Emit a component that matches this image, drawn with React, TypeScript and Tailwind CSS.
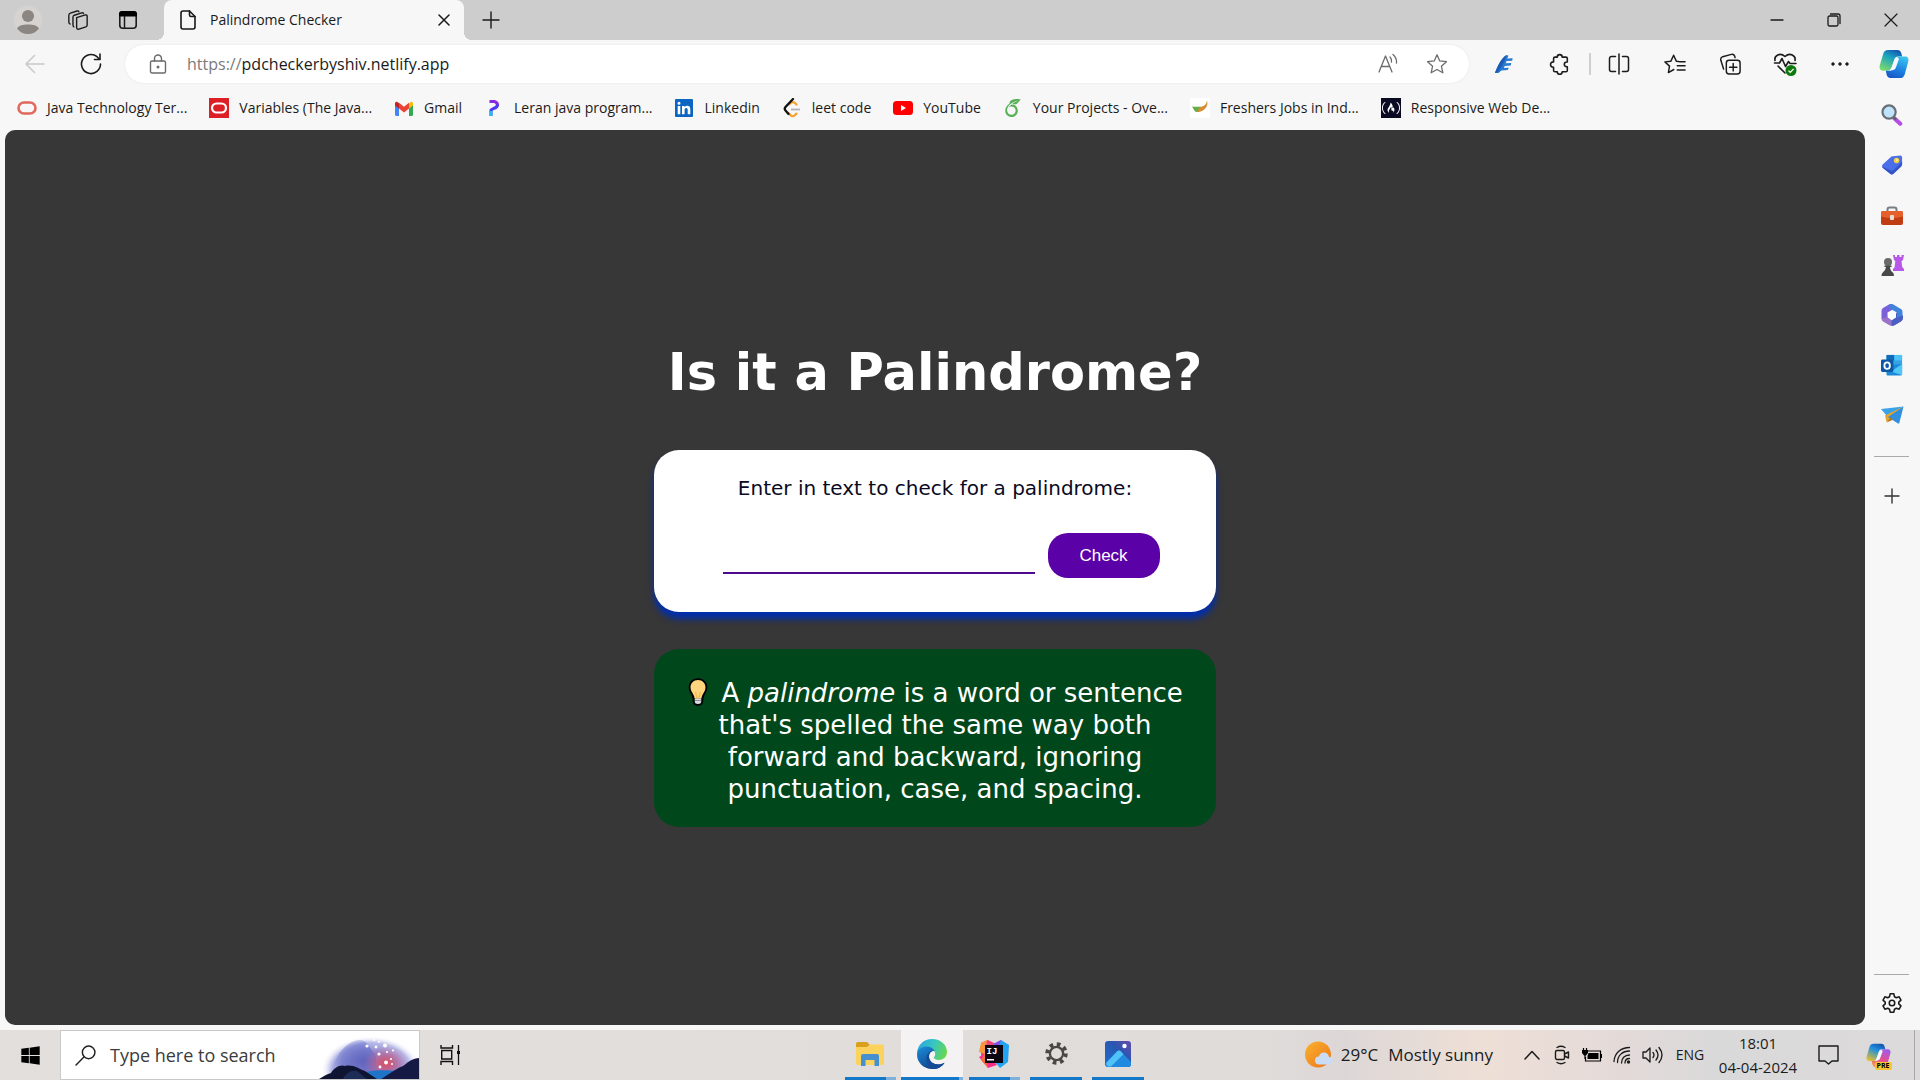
import React from "react";
import { SiFreecodecamp, SiOverleaf } from "react-icons/si";
import { FaWindows } from "react-icons/fa";

type SvgProps = { w: number; h?: number; box?: string; children: React.ReactNode; className?: string };

function Svg({ w, h = w, box = "0 0 24 24", children, className = "" }: SvgProps) {
  return (
    <svg width={w} height={h} viewBox={box} fill="none" className={`block shrink-0 ${className}`} aria-hidden="true">
      {children}
    </svg>
  );
}

function Line({ w, h, box, sw = 1.5, className = "", children }: SvgProps & { sw?: number }) {
  return (
    <Svg w={w} h={h} box={box} className={className}>
      <g stroke="currentColor" strokeWidth={sw} strokeLinecap="round" strokeLinejoin="round">
        {children}
      </g>
    </Svg>
  );
}

function IconButton({ label, className, children }: { label: string; className: string; children: React.ReactNode }) {
  return (
    <button type="button" aria-label={label} className={`flex shrink-0 items-center justify-center ${className}`}>
      {children}
    </button>
  );
}

/* ---------- tab strip ---------- */

function TabStrip() {
  return (
    <header className="flex h-10 items-center bg-[#cdcdcd] text-[#1a1a1a]">
      <IconButton label="Profile" className="w-14">
        <Svg w={28}>
          <circle cx="12" cy="12" r="12" fill="#d6d3d0" />
          <circle cx="12" cy="8.6" r="5.2" fill="#8b8682" />
          <path d="M2.6 19.2C4 16.6 7.400 15.800 12 15.800s8 .8 9.400 3.400A12 12 0 0 1 12 24a12 12 0 0 1-9.400-4.800z" fill="#8b8682" />
        </Svg>
      </IconButton>
      <IconButton label="Workspaces" className="w-11">
        <Line w={22} sw={1.5}>
          <path d="M10.500 9.500 20 6.500q2-.4 2 1.500v9.500q0 1.500-1.400 2l-7.600 2.500q-2.500.6-2.500-2z" />
          <path d="M7.500 19.500q-1-.5-1-2V9q0-1.600 1.500-2.200l8-2.600q1.600-.4 2 .8" />
          <path d="M3.500 16.500q-1.500-.5-1.500-2V7q0-1.800 1.700-2.400L11 2.200q1.600-.4 2 .8" />
        </Line>
      </IconButton>
      <IconButton label="Tab actions" className="w-14">
        <Svg w={20} box="0 0 20 20">
          <rect x="1.800" y="1.800" width="16.400" height="16.400" rx="3" stroke="currentColor" strokeWidth="1.600" />
          <path d="M1 6.500V4a3 3 0 0 1 3-3h12a3 3 0 0 1 3 3v2.500z" fill="#000" />
          <path d="M6.500 6v12" stroke="currentColor" strokeWidth="1.500" />
        </Svg>
      </IconButton>
      <div className="h-2 w-2 shrink-0 self-end bg-[radial-gradient(circle_at_0_0,#cdcdcd_8px,#f7f7f7_8px)]" />
      <div className="flex h-10 w-[300px] shrink-0 items-center rounded-t-lg bg-[#f7f7f7] pl-4">
        <Line w={16} h={20} box="0 0 16 20" sw={1.6}>
          <path d="M3 1h6.500L15 6.500V17a2 2 0 0 1-2 2H3a2 2 0 0 1-2-2V3a2 2 0 0 1 2-2z" />
          <path d="M9.500 1v4a1.500 1.500 0 0 0 1.500 1.500h4" />
        </Line>
        <span className="ml-3.5 flex-1 text-sm">Palindrome Checker</span>
        <IconButton label="Close tab" className="mr-2 w-6">
          <Line w={12} box="0 0 12 12" sw={1.5}>
            <path d="m1 1 10 10M11 1 1 11" />
          </Line>
        </IconButton>
      </div>
      <div className="h-2 w-2 shrink-0 self-end bg-[radial-gradient(circle_at_100%_0,#cdcdcd_8px,#f7f7f7_8px)]" />
      <IconButton label="New tab" className="w-[38px]">
        <Line w={18} box="0 0 18 18" sw={1.4}>
          <path d="M9 1v16M1 9h16" />
        </Line>
      </IconButton>
      <div className="ml-auto flex pr-px">
        <IconButton label="Minimise" className="h-10 w-[57px]">
          <Line w={14} box="0 0 14 14" sw={1.3}>
            <path d="M1 7h12" />
          </Line>
        </IconButton>
        <IconButton label="Restore" className="h-10 w-[57px]">
          <Line w={14} box="0 0 14 14" sw={1.3}>
            <rect x="1" y="3" width="10" height="10" rx="1.500" />
            <path d="M3.500 1H11a2 2 0 0 1 2 2v7.500" />
          </Line>
        </IconButton>
        <IconButton label="Close" className="h-10 w-[57px]">
          <Line w={14} box="0 0 14 14" sw={1.2}>
            <path d="m1 1 12 12M13 1 1 13" />
          </Line>
        </IconButton>
      </div>
    </header>
  );
}

/* ---------- toolbar ---------- */

function CopilotMark({ size, id, pre = false }: { size: number; id: string; pre?: boolean }) {
  return (
    <Svg w={size} box="0 0 30 30">
      <defs>
        <linearGradient id={`${id}a`} x1="0.700" y1="0" x2="0.200" y2="1">
          <stop offset="0" stopColor="#1559b0" />
          <stop offset=".35" stopColor={pre ? "#1f8fe0" : "#18a0c0"} />
          <stop offset="1" stopColor={pre ? "#e8c02c" : "#7ddc6a"} />
        </linearGradient>
        <linearGradient id={`${id}b`} x1="0.700" y1="0" x2="0.300" y2="1">
          <stop offset="0" stopColor={pre ? "#a05be8" : "#38c4f0"} />
          <stop offset=".6" stopColor={pre ? "#e8508c" : "#1e7fe0"} />
          <stop offset="1" stopColor={pre ? "#f59a4a" : "#1858c8"} />
        </linearGradient>
      </defs>
      <path d="M9 1h9.500c2.300 0 3.200 1.300 3.900 3.500l.8 3h-4c-2.200 0-3.200 1-3.900 3l-2.800 8c-.7 2-2 3.200-4.200 3.200H4C1 21.700 0 19.300.8 16.300L4.300 4.600C5.100 2.200 6.500 1 9 1z" fill={`url(#${id}a)`} />
      <path d="M21 29h-9.500c-2.300 0-3.200-1.300-3.900-3.500l-.8-3.800h3.500c2.200 0 3.300-1 4-3l2.900-8.200c.7-2 1.800-3 4-3H26c3 0 4 2.200 3.200 5.200l-3.500 12.700C24.900 27.800 23.500 29 21 29z" fill={`url(#${id}b)`} />
      <path d="M17.500 8.500c-1.200.6-1.700 1.500-2.200 3l-2.600 7.200c-.4 1.200-1 2.200-2 2.800 2.400-.2 5.100-.2 6-2.500l3-8.300c.4-1.200-.2-2.300-2.200-2.200z" fill="#f4f8ff" />
    </Svg>
  );
}

function Toolbar() {
  return (
    <nav aria-label="Browser toolbar" className="flex h-12 items-center bg-[#f7f7f7] text-[#1b1b1b]">
      <IconButton label="Back" className="ml-[13px] w-11 text-[#c9c9c9]">
        <Line w={20} box="0 0 20 20">
          <path d="M19 10H1M9.500 1.500 1 10l8.500 8.500" />
        </Line>
      </IconButton>
      <IconButton label="Refresh" className="w-[68px]">
        <Line w={22} box="0 0 22 22" sw={1.6}>
          <path d="M20.500 11A9.500 9.500 0 1 1 17 3.700l2.500 2.500" />
          <path d="M20 1v5.500h-5.500" />
        </Line>
      </IconButton>
      <div className="flex h-[38px] min-w-0 flex-1 items-center rounded-full bg-white pr-2 pl-6 shadow-[0_0_3px_rgba(0,0,0,0.08)]">
        <Line w={18} h={20} box="0 0 18 20" sw={1.4} className="text-[#6b6b6b]">
          <rect x="1.500" y="7" width="15" height="12" rx="1.500" />
          <path d="M5.500 7V4.500a3.500 3.500 0 0 1 7 0V7" />
          <circle cx="9" cy="13" r=".8" fill="currentColor" />
        </Line>
        <label htmlFor="address" className="ml-5 text-base text-[#7a7a7a]">https://</label>
        <input id="address" type="text" defaultValue="pdcheckerbyshiv.netlify.app" className="min-w-0 flex-1 bg-transparent text-base text-[#1b1b1b] outline-none" />
        <IconButton label="Read aloud" className="w-[50px] text-[#6b6b6b]">
          <Line w={22} box="0 0 22 22" sw={1.3}>
            <path d="M2 19 8.500 3 15 19M4.500 13.500h8" />
            <path d="M13 4q2 2 1.500 5M16 1.500q4 3.500 3.500 8.500" />
          </Line>
        </IconButton>
        <IconButton label="Add to favourites" className="w-[48px] text-[#6b6b6b]">
          <Line w={22} box="0 0 24 24" sw={1.4}>
            <path d="m12 2 3 6.700 7.300.8-5.500 4.900 1.600 7.200L12 18l-6.400 3.600 1.600-7.200L1.700 9.500 9 8.700z" />
          </Line>
        </IconButton>
      </div>
      <IconButton label="Extension" className="ml-[7px] w-14">
        <Svg w={20} box="0 0 22 22">
          <path d="M1 21C3 15 8 4 14 1l2 1-1.500 3 6-.2-.5 2.600-6.200.4-.8 2.500 6-.3-.6 2.600-6.600.5-1 2.300 5.500-.2-1.200 2.500-7 .5L5 21z" fill="#2a7ad2" />
          <path d="M1 21C3 15 8 4 14 1c-1.500 5-5 13-10 19z" fill="#1d5cb4" />
        </Svg>
      </IconButton>
      <IconButton label="Extensions" className="w-14">
        <Line w={22} box="0 0 24 24" sw={1.7}>
          <path d="M9 4.500a2.700 2.700 0 0 1 5.400 0h4.100a1.500 1.500 0 0 1 1.500 1.500v3.800h-.7a2.600 2.600 0 0 0 0 5.200h.7V19a1.500 1.500 0 0 1-1.500 1.500h-4.100a2.700 2.700 0 0 1-5.400 0H6.500A1.500 1.500 0 0 1 5 19v-3.500h-.4a2.900 2.900 0 0 1 0-5.800H5V6a1.500 1.500 0 0 1 1.500-1.500z" />
        </Line>
      </IconButton>
      <div className="ml-px h-[22px] w-0.5 bg-[#cfcfcf]" />
      <IconButton label="Split screen" className="w-14">
        <Line w={22} box="0 0 22 22" sw={1.5}>
          <path d="M7.500 3.500h-4a2 2 0 0 0-2 2v11a2 2 0 0 0 2 2h4M14.500 3.500h4a2 2 0 0 1 2 2v11a2 2 0 0 1-2 2h-4M11 1v20" />
        </Line>
      </IconButton>
      <IconButton label="Favourites" className="w-14">
        <Line w={22} box="0 0 24 24" sw={1.6}>
          <path d="m16 9.300-2.600-.4-2.900-6.400-3 6.400-6.500.8L6 14.300l-1.200 7 5.900-3.300M17 9.500h6M14.500 14H23M14.500 18.500H23" />
        </Line>
      </IconButton>
      <IconButton label="Collections" className="w-[54px]">
        <Line w={22} box="0 0 24 24" sw={1.6}>
          <rect x="8" y="8" width="15" height="15" rx="3" />
          <path d="M15.500 11.500v8M11.500 15.500h8M5 17.500 2 8Q1.300 4.800 4 4l9.500-2.500q3-.6 3.800 2.500l.2 1" />
        </Line>
      </IconButton>
      <IconButton label="Browser essentials" className="w-14">
        <Svg w={24}>
          <g stroke="#1b1b1b" strokeWidth="1.600" strokeLinecap="round" strokeLinejoin="round">
            <path d="M2 8.500C1 3.500 7 0 12 4.500 17 0 23 3.500 22 8.500" />
            <path d="M1.500 11h5L9 6.500l3.500 8L15.500 9.500l1.500 2h6M5 14l7 7" />
          </g>
          <circle cx="18" cy="18.500" r="5.500" fill="#0e7a0d" />
          <path d="m15.500 18.600 1.800 1.800 3.300-3.500" stroke="#fff" strokeWidth="1.300" />
        </Svg>
      </IconButton>
      <IconButton label="More" className="w-[54px]">
        <Svg w={18} h={4} box="0 0 18 4">
          <path d="M2 .3a1.700 1.700 0 1 0 .01 0M9 .3a1.700 1.700 0 1 0 .01 0M16 .3a1.700 1.700 0 1 0 .01 0" fill="#1b1b1b" />
        </Svg>
      </IconButton>
      <IconButton label="Copilot" className="w-[53px]">
        <CopilotMark size={30} id="cp" />
      </IconButton>
    </nav>
  );
}

/* ---------- bookmarks ---------- */

const bookmarks: { text: string; icon: React.ReactNode }[] = [
  {
    text: "Java Technology Ter...",
    icon: (
      <Svg w={20} h={14} box="0 0 20 14">
        <rect x="1.500" y="1.500" width="17" height="11" rx="5.500" stroke="#e0695c" strokeWidth="2.600" />
      </Svg>
    ),
  },
  {
    text: "Variables (The Java...",
    icon: (
      <Svg w={20} box="0 0 20 20">
        <path d="M0 0h20v20H0z" fill="#dd1f26" />
        <rect x="3" y="5.500" width="14" height="9" rx="4.500" stroke="#fff" strokeWidth="2.200" />
      </Svg>
    ),
  },
  {
    text: "Gmail",
    icon: (
      <Svg w={20} h={15} box="0 0 20 15">
        <path d="M1 3v10.500Q1 15 2.500 15H5V6z" fill="#4285f4" />
        <path d="M19 3v10.500q0 1.500-1.500 1.500H15V6z" fill="#34a853" />
        <path d="M15 2.500V7.600l4-3V2.500Q19 .3 17 .7z" fill="#fbbc04" />
        <path d="M5 7.600V1.800l5 3.900 5-3.900v5.800l-5 3.900z" fill="#ea4335" />
        <path d="M1 4.600V2.500Q1 .3 3 .7l2 1.500v5.400z" fill="#c5221f" />
      </Svg>
    ),
  },
  {
    text: "Leran java program...",
    icon: (
      <Svg w={20} box="0 0 20 20">
        <path d="M5.500 3.500h5q3.500 1 3 4.500" stroke="#8a2be2" strokeWidth="3" strokeLinejoin="round" />
        <path d="M13.500 6.500q0 3-4 4l-2.500 1.500V18" stroke="#4a3af0" strokeWidth="3" strokeLinejoin="round" />
        <path d="M5.500 13h3v5h-3z" fill="#28b8f5" />
      </Svg>
    ),
  },
  {
    text: "Linkedin",
    icon: (
      <Svg w={18} box="0 0 18 18">
        <rect width="18" height="18" rx="1" fill="#0a66c2" />
        <path d="M2.700 7h2.600v8.300H2.700zM4 2.700a1.500 1.500 0 1 1 0 3 1.500 1.500 0 0 1 0-3zM7 7h2.500v1.200c.5-.8 1.400-1.400 2.700-1.400 2.500 0 3.100 1.600 3.100 3.900v4.600h-2.600v-4.100c0-1.100-.1-2.200-1.400-2.200s-1.700 1-1.700 2.100v4.200H7z" fill="#fff" />
      </Svg>
    ),
  },
  {
    text: "leet code",
    icon: (
      <Svg w={18} h={20} box="0 0 18 20">
        <path d="M6 6.500 8.500 4.500q1.500-1 3 .2l2 1.800M5.500 15l2.600 2.600q1.600 1.200 3.200 0l2.200-2" stroke="#f5a32c" strokeWidth="2.200" strokeLinecap="round" />
        <path d="M10 1 2.500 9q-1.500 1.800 0 3.500L5.500 16" stroke="#111" strokeWidth="2.300" strokeLinecap="round" />
        <path d="M8 11.500h9" stroke="#b3b3b3" strokeWidth="1.800" />
      </Svg>
    ),
  },
  {
    text: "YouTube",
    icon: (
      <Svg w={20} h={14} box="0 0 20 14">
        <rect width="20" height="14" rx="3.500" fill="#f00" />
        <path d="m8 4 5 3-5 3z" fill="#fff" />
      </Svg>
    ),
  },
  { text: "Your Projects - Ove...", icon: <SiOverleaf size={18} color="#56b056" aria-hidden="true" /> },
  {
    text: "Freshers Jobs in Ind...",
    icon: (
      <Svg w={20} box="0 0 20 20">
        <path d="M0 0h20v20H0z" fill="#fff" />
        <path d="M2 8.500c4 1 6-.5 10 .5-.5 4-4 6-7 4.500z" fill="#5fae4a" />
        <path d="M17 2.500c1.500 4.500-1 10.500-9 11.500-1-2.500 1.500-4.500 4-5.500 3-1 4.500-2.500 5-6z" fill="#d98c30" />
      </Svg>
    ),
  },
  {
    text: "Responsive Web De...",
    icon: (
      <span className="flex h-5 w-5 items-center justify-center bg-[#0a0a23]">
        <SiFreecodecamp size={18} color="#ffffff" aria-hidden="true" />
      </span>
    ),
  },
];

function Bookmarks() {
  return (
    <nav aria-label="Bookmarks" className="flex h-[42px] items-center gap-[22px] bg-[#f7f7f7] pb-0.5 pl-[17px] text-sm whitespace-nowrap text-[#1b1b1b]">
      {bookmarks.map((b) => (
        <a key={b.text} href="#bookmark" className="flex items-center gap-2.5">
          <span className="flex w-5 justify-center">{b.icon}</span>
          {b.text}
        </a>
      ))}
    </nav>
  );
}

/* ---------- palindrome page ---------- */

function PalindromePage() {
  return (
    <main className="mb-[5px] ml-[5px] flex flex-1 flex-col items-center rounded-[10px] bg-[#373737] px-4 pt-[213px] pb-16 font-['DejaVu_Sans',Verdana,sans-serif]">
      <h1 className="text-center text-[51px] leading-[60px] font-bold text-white">Is it a Palindrome?</h1>
      <form
        onSubmit={(e) => e.preventDefault()}
        className="mt-[47px] flex w-full max-w-[562px] flex-col items-center rounded-[25px] bg-white pt-[26px] pb-[34px] shadow-[0_7px_6px_#002ead]"
      >
        <label htmlFor="text-input" className="text-xl leading-6 text-[#0a0a23]">
          Enter in text to check for a palindrome:
        </label>
        <div className="mt-[33px] flex items-start gap-[13px] pl-3">
          <input id="text-input" type="text" className="h-[41px] w-[312px] border-b-2 border-[#4d0a8f] text-center text-xl outline-none" />
          <button type="submit" className="h-[45px] w-28 rounded-[20px] bg-[#5a01a7] font-['Liberation_Sans',Arial,sans-serif] text-[17px] text-white">
            Check
          </button>
        </div>
      </form>
      <p className="mt-[37px] w-full max-w-[562px] rounded-[25px] bg-[#00471b] px-6 pt-7 pb-[22px] text-center text-[26px] leading-8 text-white">
        <svg width="22" height="30" viewBox="0 0 22 30" className="mr-1 inline-block align-[-5px]" role="img" aria-label="Light bulb">
          <path d="M11 1.200c5.500 0 9.300 4 9.300 9.300 0 3.500-1.500 5.200-2.700 7.500-1 2-1.300 4-1.400 6.500-.2 2.800-2.200 4.300-5.200 4.300s-5-1.500-5.200-4.300c-.1-2.500-.4-4.500-1.400-6.500C3.200 15.700 1.700 14 1.700 10.500c0-5.300 3.800-9.300 9.300-9.300z" fill="#000" />
          <path d="M11 3c4.500 0 7.500 3.200 7.500 7.500 0 3.500-2.500 5.500-3.500 8.500-.3 1-.5 1.800-.5 2.500h-7c0-.7-.2-1.500-.5-2.500-1-3-3.500-5-3.500-8.500C3.500 6.200 6.500 3 11 3z" fill="#ffd67d" />
          <path d="m8.500 15 1.500 6h2l1.500-6" stroke="#f7b84a" strokeWidth="1.200" fill="none" />
          <path d="M7.800 21.500h6.400v3q0 2.500-3.200 2.500t-3.200-2.500z" fill="#d9dde0" />
          <path d="M7.800 23.500h6.400" stroke="#8b8f94" strokeWidth="1" />
        </svg>{" "}
        A <em>palindrome</em> is a word or sentence that&apos;s spelled the same way both forward and backward, ignoring punctuation, case, and spacing.
      </p>
    </main>
  );
}

/* ---------- Edge sidebar ---------- */

const sidebarItems: { label: string; icon: React.ReactNode }[] = [
  {
    label: "Search",
    icon: (
      <Svg w={22}>
        <path d="m14.500 15.500 6.500 6" stroke="#b44de8" strokeWidth="4.500" strokeLinecap="round" />
        <path d="m13.500 14 3 3" stroke="#5b6068" strokeWidth="2.500" />
        <circle cx="8.800" cy="8.800" r="7.200" fill="#bfe3fa" stroke="#6a6f76" strokeWidth="2.400" />
      </Svg>
    ),
  },
  {
    label: "Shopping",
    icon: (
      <Svg w={22}>
        <path d="M13 2.500 21 1.500q2 0 2 2V11q0 1.500-1 2.500l-8.500 8q-1.700 1.500-3.500 0L1.800 15q-1.600-1.700 0-3.500L10.500 3.500q1-.9 2.500-1z" fill="#4a6fe8" />
        <path d="m1 14 .8 1 8.200 6.500q1.800 1.500 3.500 0l8.500-8L23 11.500v-3L12.500 18.500z" fill="#3455c9" />
        <circle cx="17" cy="7" r="3" fill="#f5cd45" />
        <circle cx="17.400" cy="6.600" r="1.200" fill="#fff3bd" />
      </Svg>
    ),
  },
  {
    label: "Tools",
    icon: (
      <Svg w={24}>
        <path d="M7.500 8V6.500q0-2 2-2h5q2 0 2 2V8" stroke="#777c82" strokeWidth="2" />
        <rect x="1" y="8" width="22" height="14" rx="2" fill="#c03c12" />
        <path d="M1 10q0-2 2-2h18q2 0 2 2v3.500q-11 3-22 0z" fill="#e5602b" />
        <rect x="10" y="12" width="4" height="5" rx="1" fill="#e8dcd6" />
      </Svg>
    ),
  },
  {
    label: "Games",
    icon: (
      <Svg w={24}>
        <path d="M13 2h2v2h2V2h2.500v2h2V2H24l-1 5-1.500 1 .7 6L24 16v2H13v-2l1.700-2 .6-6L14 7z" fill="#b758e8" />
        <circle cx="8" cy="9" r="4" fill="#6a6a6a" />
        <path d="M4.500 12.500h7v1.600H10q.2 4 2.800 5.400 1.200.8 1.200 3.500H1.500q0-2.700 1.300-3.500Q5.500 18 6 14.100H4.500z" fill="#494949" />
      </Svg>
    ),
  },
  {
    label: "Microsoft 365",
    icon: (
      <Svg w={24}>
        <path d="M9 1.500 3 5Q1.500 6 1.500 8v8l6 .2V9.500L17 4l-4-2.500q-2-1-4 0z" fill="#7a5fd8" />
        <path d="M13 1.500 21 6q1.500 1 1.500 3v6.500L17 18V9.500L9 5V1.500q2-1 4 0z" fill="#3f83dc" />
        <path d="M22.500 14v1.500q0 2-1.500 3l-6.500 3.800q-2.500 1.300-5 0L3 18.500q-1.500-1-1.500-3l6-1.500 4.500 3.500z" fill="#9a72c8" />
        <path d="M17 9v5.800l6-2.500V15q0 2-1.500 3l-7 4.300q-1.500.6-3 .2V17.500z" fill="#4a5fc4" />
        <path d="m12 8 4 2v4.500L12 17l-4-2.500V10z" fill="#fff" />
      </Svg>
    ),
  },
  {
    label: "Outlook",
    icon: (
      <Svg w={22}>
        <rect x="6" y="1" width="17" height="20" rx="1.500" fill="#35a5e6" />
        <path d="M6 1h8.500v6H6z" fill="#0f6cbd" />
        <path d="M14.500 1H23v6h-8.500z" fill="#4cc2f5" />
        <path d="M6 12l17-1v11q0 1.500-1.500 1.500H7.500Q6 23.500 6 22z" fill="#1d8ad8" />
        <path d="m23 11-12 8 11.500 4q.5-.5.500-1z" fill="#4fc8f7" />
        <rect y="6" width="13.500" height="13.500" rx="1.500" fill="#0c5aa6" />
        <ellipse cx="6.700" cy="12.700" rx="3" ry="3.500" stroke="#fff" strokeWidth="2" />
      </Svg>
    ),
  },
  {
    label: "Drop",
    icon: (
      <Svg w={24}>
        <path d="M1 6 23.500 3.500 7 13z" fill="#3aa2e8" />
        <path d="M23.500 3.500 5 12.500 6.500 19l4-3.500z" fill="#e3a52b" />
        <path d="M23.500 3.500 8 14l10 6.500q1 .4 1.400-.8z" fill="#2f8fe0" />
        <path d="m6.500 19.500 4-5 2.500 2.300z" fill="#b27716" />
      </Svg>
    ),
  },
];

function Sidebar() {
  return (
    <aside aria-label="Sidebar" className="flex w-[55px] shrink-0 flex-col items-center bg-[#f7f7f7] pt-0.5 pr-0.5">
      {sidebarItems.map((s) => (
        <IconButton key={s.label} label={s.label} className="h-[50px] w-full">
          {s.icon}
        </IconButton>
      ))}
      <div className="mt-4 h-px w-[35px] bg-[#a9a9a9]" />
      <IconButton label="Customise" className="mt-[15px] h-12 w-full text-[#333]">
        <Line w={16} box="0 0 16 16" sw={1.4}>
          <path d="M8 1v14M1 8h14" />
        </Line>
      </IconButton>
      <div className="mt-auto h-px w-[35px] bg-[#a9a9a9]" />
      <IconButton label="Settings" className="h-[55px] w-full text-[#1b1b1b]">
        <Line w={22} sw={1.7}>
          <path d="M10 2h4l.7 3.200 2 1.100 3.100-1 2 3.500-2.400 2.200v2l2.400 2.200-2 3.500-3.100-1-2 1.100L14 22h-4l-.7-3.200-2-1.100-3.100 1-2-3.500L4.600 13v-2L2.200 8.800l2-3.500 3.100 1 2-1.100z" />
          <circle cx="12" cy="12" r="3" />
        </Line>
      </IconButton>
    </aside>
  );
}

/* ---------- Windows taskbar ---------- */

function SearchArt() {
  return (
    <svg width="100" height="48" viewBox="0 0 100 48" className="block shrink-0" aria-hidden="true">
      <defs>
        <radialGradient id="sky" cx="50%" cy="60%" r="50%">
          <stop offset="0" stopColor="#9a6ab4" />
          <stop offset=".5" stopColor="#8a86d0" />
          <stop offset=".8" stopColor="#b9bbe8" />
          <stop offset="1" stopColor="#ffffff" stopOpacity="0" />
        </radialGradient>
        <radialGradient id="haze" cx="70%" cy="60%" r="75%">
          <stop offset="0" stopColor="#5f63bb" />
          <stop offset=".6" stopColor="#6f78cc" stopOpacity=".7" />
          <stop offset="1" stopColor="#8f96dc" stopOpacity="0" />
        </radialGradient>
        <radialGradient id="glow">
          <stop offset="0" stopColor="#e04a5a" />
          <stop offset="1" stopColor="#c86a9c" stopOpacity="0" />
        </radialGradient>
      </defs>
      <ellipse cx="52" cy="32" rx="50" ry="34" fill="url(#sky)" />
      <path d="M10 44C16 28 24 11 40 9c9 0 10 8 16 14 2 5 0 9 4 21z" fill="url(#haze)" />
      <ellipse cx="67" cy="32" rx="22" ry="17" fill="url(#glow)" />
      <path d="M36 48c8-9 20-10 46-8l8 8z" fill="#1f74c8" />
      <path d="M0 48c5-3 8-5 12-6 3-5 9-9 14-7 8-2 14 3 20 5l12 8z" fill="#101433" />
      <path d="M24 48c3-6 8-9 14-8l10 8z" fill="#1d2b57" />
      <path d="M62 48c7-4 14-10 22-13 4-2 6-7 16-8v21z" fill="#151a45" />
      <g fill="#fff">
        <circle cx="48" cy="15" r="1.600" /><circle cx="57" cy="16" r="1.400" /><circle cx="66" cy="14.500" r="2" />
        <circle cx="55" cy="9" r="1.100" /><circle cx="60" cy="23" r="1.600" /><circle cx="68" cy="21" r="1.100" />
        <circle cx="67" cy="31.500" r="2" /><circle cx="61" cy="36" r="1.400" /><circle cx="72" cy="28" r="1.100" />
        <circle cx="74" cy="19.500" r="1.100" /><circle cx="49" cy="5" r=".8" /><circle cx="60" cy="11" r=".9" />
        <circle cx="73" cy="33" r="1" />
      </g>
    </svg>
  );
}

const apps: { label: string; icon: React.ReactNode; cell: string; bar: string }[] = [
  {
    label: "File Explorer",
    cell: "w-[62px]",
    bar: "ml-1.5 mr-[5px] border-r-[10px] border-[#7fb0dc]",
    icon: (
      <Svg w={28} h={24} box="0 0 28 24">
        <path d="M0 2q0-2 2-2h9l3 3-3 4H0z" fill="#d9a01e" />
        <path d="M0 5h11l3-2.500h12q2 0 2 2V21q0 2-2 2H2q-2 0-2-2z" fill="#fbd35c" />
        <path d="M5 24V14q0-2 2-2h14q2 0 2 2v10h-4.500v-6h-9v6z" fill="#4690cf" />
      </Svg>
    ),
  },
  {
    label: "Microsoft Edge",
    cell: "w-[62px] bg-[#f4f2f2]",
    bar: "border-r-4 border-[#7fb0dc]",
    icon: (
      <Svg w={30} box="0 0 30 30">
        <defs>
          <linearGradient id="edgeTop" x1="0" y1="0.300" x2="1" y2="0.600">
            <stop offset="0" stopColor="#2aa6de" />
            <stop offset=".5" stopColor="#38c6c2" />
            <stop offset="1" stopColor="#68d84a" />
          </linearGradient>
          <linearGradient id="edgeLow" x1="0" y1="0" x2="0.600" y2="1">
            <stop offset="0" stopColor="#1b8fd8" />
            <stop offset="1" stopColor="#123f8a" />
          </linearGradient>
        </defs>
        <path d="M0 15C0 6 7 0 15 0c9 0 15 6 15 13 0 5-4 8-8 8-3 0-5-1-5-2.200 0-1 1.200-1.500 1.200-4C18 11 14 8 9.500 8 4 8 .5 11.500 0 15z" fill="url(#edgeTop)" />
        <path d="M0 15.500C0 10 5 7.500 9.500 7.500c4 0 7 2 8.200 4.500C14.500 11.500 12 14 12 17.500c0 5 4.500 8 9.500 8 3 0 4.600-1.200 6-1.800C25 27.800 20.500 30 15 30 6.500 30 0 23.500 0 15.500z" fill="url(#edgeLow)" />
        <path d="M9.500 20c0-4.500 2.500-8 6.500-8.700C13 12.500 12 15 12 17.500c0 5 4.500 8 9.500 8 3 0 4.600-1.200 6-1.800C25 27.800 20.500 30 17 30c-4.500-1-7.500-5.500-7.500-10z" fill="#154a98" />
      </Svg>
    ),
  },
  {
    label: "IntelliJ IDEA",
    cell: "w-[62px]",
    bar: "ml-1.5 mr-[5px] border-r-[10px] border-[#7fb0dc]",
    icon: (
      <Svg w={30} box="0 0 30 30">
        <path d="M2 4 9 1l8 4-3 10-12 2z" fill="#f0457c" />
        <path d="M2 4 8 1 6 15 0 13z" fill="#f7943c" />
        <path d="m15 5 7-4 8 5-1 17-8 6-5-6z" fill="#20a4f3" />
        <path d="m14 5 8-4-2 6z" fill="#8a4be8" />
        <path d="m0 18 8-4 10 12-9 3z" fill="#f52e8c" />
        <path d="m2 21 4-7 3 15z" fill="#f76d3a" />
        <path d="M6 6h18v18H6z" fill="#0c0710" />
        <text x="7.500" y="14.500" fill="#fff" fontSize="9" fontWeight="bold" fontFamily="'Liberation Mono', monospace">IJ</text>
        <path d="M8 20h7v1.500H8z" fill="#fff" />
      </Svg>
    ),
  },
  {
    label: "Settings",
    cell: "w-[62px]",
    bar: "mx-[5px]",
    icon: (
      <Svg w={23}>
        <circle cx="12" cy="12" r="9.700" stroke="#4a4745" strokeWidth="4" strokeDasharray="3.810 3.810" />
        <circle cx="12" cy="12" r="6.900" stroke="#4a4745" strokeWidth="2.400" />
      </Svg>
    ),
  },
  {
    label: "Photos",
    cell: "w-[62px]",
    bar: "mx-[5px]",
    icon: (
      <Svg w={26} box="0 0 26 26">
        <defs>
          <linearGradient id="photoBg" x1="0" y1="1" x2="1" y2="0">
            <stop offset="0" stopColor="#1c6fd0" />
            <stop offset=".6" stopColor="#2a56b0" />
            <stop offset="1" stopColor="#6a4ab0" />
          </linearGradient>
        </defs>
        <rect width="26" height="26" rx="3" fill="url(#photoBg)" />
        <path d="M1 22 12 10.500q2-1.800 4 0L26 21v2q0 3-3 3H4q-2.500 0-3-2z" fill="#2089e0" />
        <path d="M1.500 21.500 12 10.500q2-1.800 4 0l2.500 2.700L6.500 25q-2 1.500-4 0T1.500 21.500z" fill="#4fc3f7" />
        <circle cx="19.500" cy="5" r="2.200" fill="#fff" />
      </Svg>
    ),
  },
];

function Taskbar() {
  return (
    <footer className="flex h-[50px] bg-[linear-gradient(90deg,#e3dfdd_0%,#e0dcda_66%,#dcd7d6_70%,#eedfd6_77%,#e6dbd8_83%,#dad9d9_89%,#dcdadb_100%)] text-[#1b1b1b]">
      <div className="flex w-[43.7%] items-center">
        <IconButton label="Start" className="h-full w-[60px]">
          <FaWindows size={21} color="#000000" aria-hidden="true" />
        </IconButton>
        <div className="flex h-[50px] w-[360px] items-center border border-[#c9c9c9] bg-white pl-3.5">
          <Line w={21} box="0 0 20 20" sw={1.4} className="text-[#222]">
            <circle cx="13" cy="7" r="6" />
            <path d="M8.500 11.500 1 19" />
          </Line>
          <input type="text" aria-label="Type here to search" placeholder="Type here to search" className="ml-3.5 min-w-0 flex-1 bg-transparent text-lg outline-none placeholder:text-[#3c3c3c]" />
          <SearchArt />
        </div>
        <IconButton label="Task view" className="h-full w-[60px]">
          <Svg w={20} box="0 0 20 20">
            <path d="M1 0v3h11.500V0M1 20v-3.500h11.500V20M1.700 5.500h10v8.500h-10z" stroke="#111" strokeWidth="1.400" />
            <path d="M18.500 0v20" stroke="#111" strokeWidth="1.300" />
            <path d="M17 6h3v3h-3z" fill="#111" />
          </Svg>
        </IconButton>
      </div>
      <div className="flex">
        {apps.map((a) => (
          <button key={a.label} type="button" aria-label={a.label} className={`flex flex-col ${a.cell}`}>
            <span className="flex flex-1 items-center justify-center self-stretch">{a.icon}</span>
            <span className={`block h-[3px] self-stretch bg-[#1478c8] ${a.bar}`} />
          </button>
        ))}
      </div>
      <div className="ml-auto flex items-center whitespace-nowrap">
        <button type="button" className="flex items-center pr-6 text-[17px]">
          <Svg w={28} h={32} box="0 0 28 32" className="mr-2">
            <defs>
              <linearGradient id="sun" x1="0" y1="0" x2="1" y2="1">
                <stop offset="0" stopColor="#f9b32f" />
                <stop offset="1" stopColor="#ee7419" />
              </linearGradient>
            </defs>
            <circle cx="13" cy="15.500" r="13" fill="url(#sun)" />
            <path d="M14 25.500a4 4 0 0 1 0-8q1-4 5-4t5 4.500a3.700 3.700 0 0 1 0 7.500z" fill="#c8dcf8" />
          </Svg>
          <span>29°C</span>
          <span className="ml-2.5">Mostly sunny</span>
        </button>
        <IconButton label="Show hidden icons" className="w-[30px]">
          <Line w={16} h={10} box="0 0 16 10" sw={1.5}>
            <path d="m1 9 7-7.500L15 9" />
          </Line>
        </IconButton>
        <IconButton label="Meet now" className="w-[30px]">
          <Line w={16} h={20} box="0 0 16 20" sw={1.4}>
            <rect x="1.500" y="5.500" width="9" height="9" rx="1.500" />
            <path d="m10.500 9 4-2v6l-4-2M3 2.500q4-2.500 8 0M3 17.500q4 2.500 8 0" />
          </Line>
        </IconButton>
        <IconButton label="Battery" className="w-[30px]">
          <Svg w={20} h={14} box="0 0 20 14">
            <path d="M4.500 3h14v10h-15V9" stroke="#000" strokeWidth="1.200" />
            <path d="M6.500 5h10v6h-11V8z" fill="#000" />
            <path d="M18.500 6H20v4h-1.500zM0 2h6v3L4 7.500H2L0 5z" fill="#000" />
            <path d="M1.500 0v2M4.500 0v2M3 7v4" stroke="#000" strokeWidth="1.200" />
          </Svg>
        </IconButton>
        <IconButton label="Network" className="w-[30px]">
          <Line w={18} box="0 0 18 18" sw={1.3}>
            <path d="M1 15.500C1.500 7 8 1.500 16.500 1.500M4.500 16.500c0-7 5-11.500 12-11.500M8.500 17c0-4.500 3-8 8-8M12 17c0-2.500 1.500-4.500 4.500-4.500" />
            <circle cx="15.500" cy="16" r="1" fill="currentColor" />
          </Line>
        </IconButton>
        <IconButton label="Volume" className="w-[30px]">
          <Line w={21} h={18} box="0 0 21 18" sw={1.3}>
            <path d="M1 6h3l4-4v14l-4-4H1zM11 6.500q2 2.500 0 5M14 4q4 5 0 10M17 1.500q6 7.500 0 15" />
          </Line>
        </IconButton>
        <button type="button" className="w-[46px] text-sm">ENG</button>
        <button type="button" className="flex w-[90px] flex-col items-center text-[15px] leading-6">
          <span>18:01</span>
          <span>04-04-2024</span>
        </button>
        <IconButton label="Notifications" className="w-[50px]">
          <Line w={21} h={20} box="0 0 21 20" sw={1.4}>
            <path d="M1 1h19v15h-6l-3.500 3L7 16H1z" />
          </Line>
        </IconButton>
        <IconButton label="Copilot preview" className="w-[50px]">
          <span className="relative block">
            <CopilotMark size={25} id="pre" pre />
            <span className="absolute -right-px -bottom-0.5 rounded-xs bg-[#f6c531] px-0.5 text-[7px] leading-2 font-bold text-black">PRE</span>
          </span>
        </IconButton>
        <div className="mr-[5px] ml-[11px] h-[50px] w-px bg-[#a8a8a8]" />
      </div>
    </footer>
  );
}

export default function App() {
  return (
    <div className="flex min-h-screen flex-col bg-[#f7f7f7] font-['Open_Sans',sans-serif]">
      <TabStrip />
      <Toolbar />
      <div className="flex flex-1">
        <div className="flex min-w-0 flex-1 flex-col">
          <Bookmarks />
          <PalindromePage />
        </div>
        <Sidebar />
      </div>
      <Taskbar />
    </div>
  );
}
